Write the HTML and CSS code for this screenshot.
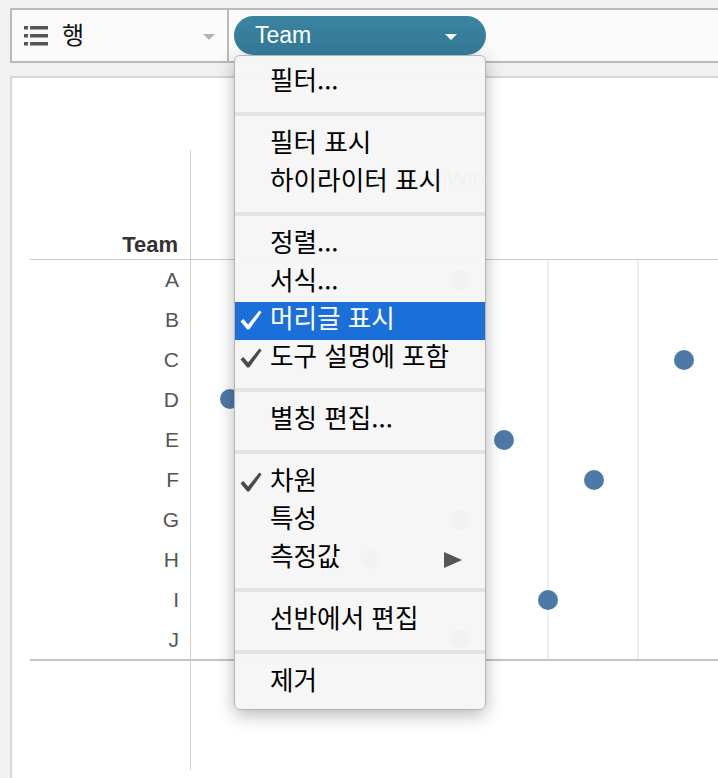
FILE: index.html
```html
<!DOCTYPE html>
<html lang="ko">
<head>
<meta charset="utf-8">
<title>Team</title>
<link rel="stylesheet" href="styles.css">
</head>
<body>
<div class="page">
  <div class="shelf">
    <div class="shelf-label">
      <svg class="list-icon" width="24" height="20" viewBox="0 0 24 20">
        <rect x="0" y="0" width="4" height="3.5" fill="#555"/>
        <rect x="6" y="0" width="18" height="3.5" fill="#555"/>
        <rect x="0" y="8" width="4" height="3.5" fill="#555"/>
        <rect x="6" y="8" width="18" height="3.5" fill="#555"/>
        <rect x="0" y="16" width="4" height="3.5" fill="#555"/>
        <rect x="6" y="16" width="18" height="3.5" fill="#555"/>
      </svg>
      <span class="shelf-name">행</span>
      <span class="caret"></span>
    </div>
    <div class="shelf-body">
      <div class="pill"><span class="pill-text">Team</span><span class="pill-caret"></span></div>
    </div>
  </div>

  <div class="chart">
    <div class="top-blank"></div>
    <div class="gutter g1"></div>
    <div class="row-header"><span>Team</span></div>
    <div class="axis-header"><span class="axis-title">Win</span></div>
    <div class="gutter g2"></div>
    <div class="labels">
      <div class="lbl">A</div><div class="lbl">B</div><div class="lbl">C</div><div class="lbl">D</div><div class="lbl">E</div>
      <div class="lbl">F</div><div class="lbl">G</div><div class="lbl">H</div><div class="lbl">I</div><div class="lbl">J</div>
    </div>
    <div class="plot">
      <span class="grid" style="left:86px"></span>
      <span class="grid" style="left:176px"></span>
      <span class="grid" style="left:266px"></span>
      <span class="grid" style="left:356px"></span>
      <span class="grid" style="left:446px"></span>
      <span class="dot" style="left:259px;top:10px"></span>
      <span class="dot" style="left:212px;top:50px"></span>
      <span class="dot" style="left:483px;top:90px"></span>
      <span class="dot" style="left:29px;top:129px"></span>
      <span class="dot" style="left:303px;top:170px"></span>
      <span class="dot" style="left:393px;top:210px"></span>
      <span class="dot" style="left:259px;top:250px"></span>
      <span class="dot" style="left:169px;top:289px"></span>
      <span class="dot" style="left:347px;top:330px"></span>
      <span class="dot" style="left:259px;top:369px"></span>
    </div>
    <div class="gutter g3"></div>
    <div class="foot-left"></div>
    <div class="foot-right"></div>
  </div>

  <div class="menu">
    <div class="item"><span class="chk"></span><span class="txt">필터...</span></div>
    <div class="sep"></div>
    <div class="item"><span class="chk"></span><span class="txt">필터 표시</span></div>
    <div class="item"><span class="chk"></span><span class="txt">하이라이터 표시</span></div>
    <div class="sep"></div>
    <div class="item"><span class="chk"></span><span class="txt">정렬...</span></div>
    <div class="item"><span class="chk"></span><span class="txt">서식...</span></div>
    <div class="item active"><span class="chk"><svg width="22" height="20" viewBox="0 0 22 20"><path d="M0.5 11.2 L3.4 9.1 L8.1 14.6 L19.4 0.6 L21.6 2.3 L9.2 19.6 L7.2 19.6 Z"/></svg></span><span class="txt">머리글 표시</span></div>
    <div class="item"><span class="chk"><svg width="22" height="20" viewBox="0 0 22 20"><path d="M0.5 11.2 L3.4 9.1 L8.1 14.6 L19.4 0.6 L21.6 2.3 L9.2 19.6 L7.2 19.6 Z"/></svg></span><span class="txt">도구 설명에 포함</span></div>
    <div class="sep"></div>
    <div class="item"><span class="chk"></span><span class="txt">별칭 편집...</span></div>
    <div class="sep"></div>
    <div class="item"><span class="chk"><svg width="22" height="20" viewBox="0 0 22 20"><path d="M0.5 11.2 L3.4 9.1 L8.1 14.6 L19.4 0.6 L21.6 2.3 L9.2 19.6 L7.2 19.6 Z"/></svg></span><span class="txt">차원</span></div>
    <div class="item"><span class="chk"></span><span class="txt">특성</span></div>
    <div class="item"><span class="chk"></span><span class="txt">측정값</span><span class="sub"></span></div>
    <div class="sep"></div>
    <div class="item"><span class="chk"></span><span class="txt">선반에서 편집</span></div>
    <div class="sep"></div>
    <div class="item"><span class="chk"></span><span class="txt">제거</span></div>
  </div>
</div>
</body>
</html>
```

FILE: styles.css
```css
html, body {
  margin: 0;
  padding: 0;
}

body {
  background: #f1f1f1;
  font-family: "Liberation Sans", "Noto Sans CJK KR", sans-serif;
  overflow: hidden;
}

.page {
  position: relative;
  height: 778px;
  padding-top: 8px;
  box-sizing: border-box;
}

/* ---------- shelf ---------- */
.shelf {
  margin-left: 10px;
  height: 55px;
  box-sizing: border-box;
  border: 2px solid #bababa;
  border-right: none;
  background: #fafafa;
  display: flex;
}

.shelf-label {
  width: 217px;
  box-sizing: border-box;
  border-right: 2px solid #bababa;
  display: flex;
  align-items: center;
  padding-left: 12px;
  padding-right: 12px;
}

.list-icon {
  display: block;
  margin-top: 1px;
}

.shelf-name {
  margin-left: 14px;
  font-family: "Noto Sans CJK KR", sans-serif;
  font-size: 24px;
  line-height: 30px;
  color: #111;
  padding-bottom: 3px;
}

.caret {
  margin-left: auto;
  width: 0;
  height: 0;
  border-left: 6.5px solid transparent;
  border-right: 6.5px solid transparent;
  border-top: 6px solid #b3b3b3;
  margin-top: 2px;
}

.shelf-body {
  flex: 1;
  display: flex;
  align-items: center;
  padding-left: 5px;
}

.pill {
  position: relative;
  z-index: 3;
  width: 252px;
  height: 39px;
  box-sizing: border-box;
  border-radius: 20px;
  background: linear-gradient(#3a84a2, #327894);
  color: #fff;
  display: flex;
  align-items: center;
  padding-left: 21px;
  padding-right: 29px;
}

.pill-text {
  font-size: 23px;
  line-height: 26px;
  margin-top: -1px;
}

.pill-caret {
  margin-left: auto;
  width: 0;
  height: 0;
  border-left: 6px solid transparent;
  border-right: 6px solid transparent;
  border-top: 6px solid #fff;
  margin-top: 2px;
}

/* ---------- chart ---------- */
.chart {
  margin: 13px 0 0 10px;
  height: 702px;
  box-sizing: border-box;
  border-top: 2px solid #d6d6d6;
  border-left: 2px solid #d6d6d6;
  background: #fff;
  display: grid;
  grid-template-columns: 18px 161px 1fr;
  grid-template-rows: 72px 110px 401px 109px 1fr;
}

.top-blank {
  grid-column: 1 / 4;
  grid-row: 1;
}

.gutter.g1 { grid-column: 1; grid-row: 2; }
.gutter.g2 { grid-column: 1; grid-row: 3; }
.gutter.g3 { grid-column: 1; grid-row: 4; }

.row-header {
  grid-column: 2;
  grid-row: 2;
  border-right: 1px solid #cfcfcf;
  border-bottom: 1px solid #cacaca;
  display: flex;
  align-items: flex-end;
  justify-content: flex-end;
  padding: 0 12px 2px 0;
}

.row-header span {
  font-size: 22px;
  line-height: 25px;
  font-weight: bold;
  color: #333;
}

.axis-header {
  grid-column: 3;
  grid-row: 2;
  border-bottom: 1px solid #cacaca;
  padding: 16px 0 0 256px;
}

.axis-title {
  font-size: 22px;
  line-height: 26px;
  color: #666;
}

.labels {
  grid-column: 2;
  grid-row: 3;
  border-right: 1px solid #cfcfcf;
  border-bottom: 2px solid #c4c4c4;
  display: flex;
  flex-direction: column;
}

.lbl {
  height: 40px;
  flex: none;
  line-height: 40px;
  text-align: right;
  padding-right: 11px;
  font-size: 21px;
  color: #555;
}

.plot {
  grid-column: 3;
  grid-row: 3;
  position: relative;
  border-bottom: 2px solid #c4c4c4;
}

.grid {
  position: absolute;
  top: 0;
  bottom: 0;
  width: 2px;
  background: #eeeeee;
}

.dot {
  position: absolute;
  width: 20px;
  height: 20px;
  border-radius: 50%;
  background: #4e79a7;
}

.foot-left {
  grid-column: 2;
  grid-row: 4;
  border-right: 1px solid #cfcfcf;
}

.foot-right {
  grid-column: 3;
  grid-row: 4;
}

/* ---------- menu ---------- */
.menu {
  position: absolute;
  z-index: 2;
  left: 234px;
  top: 55px;
  width: 252px;
  box-sizing: border-box;
  padding: 8px 0 7px;
  background: rgba(246, 246, 246, 0.97);
  border: 1px solid #b4b4b4;
  border-radius: 6px;
  box-shadow: 0 5px 18px rgba(0, 0, 0, 0.28);
  font-family: "Noto Sans CJK KR", sans-serif;
  color: #000;
}

.item {
  height: 38px;
  box-sizing: border-box;
  display: flex;
  align-items: flex-start;
  padding-left: 5px;
}

.item.active {
  background: #1b6fd9;
  color: #fff;
}

.chk {
  width: 22px;
  height: 38px;
  margin-right: 8px;
  flex: none;
}

.chk svg {
  display: block;
  margin-top: 8px;
  fill: #4a4a4a;
}

.item.active .chk svg {
  fill: #fff;
}

.txt {
  font-size: 25.6px;
  line-height: 30px;
  white-space: nowrap;
}

.sub {
  margin-left: auto;
  margin-right: 23px;
  margin-top: 12px;
  width: 0;
  height: 0;
  border-left: 18px solid #555;
  border-top: 8px solid transparent;
  border-bottom: 8px solid transparent;
}

.sep {
  height: 4px;
  margin: 10px 0;
  background: #e3e3e3;
}
```
